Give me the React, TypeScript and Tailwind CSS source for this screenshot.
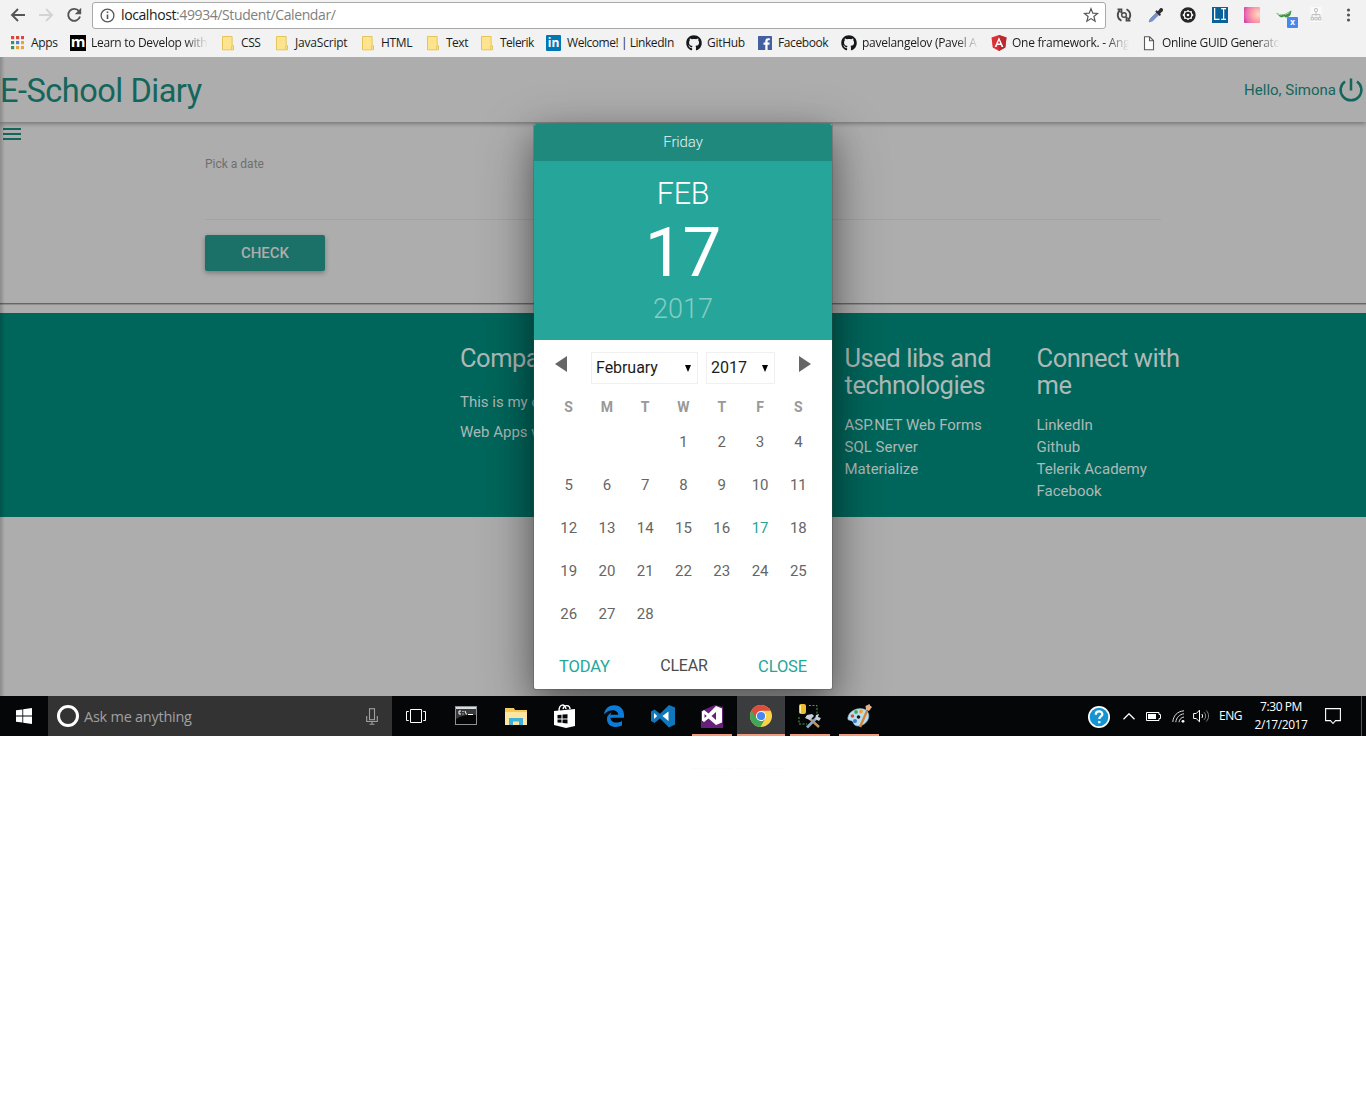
import React from 'react';
import { FaGithub } from 'react-icons/fa';

const ui = "font-['Open_Sans','Noto_Sans',sans-serif]";

function Folder() {
  return (
    <svg width="13" height="15" viewBox="0 0 13 15" className="shrink-0">
      <path d="M.5.5h9.6v9.2h1.4v4.1H.5z" fill="#ffe48f" stroke="#e5c559" />
      <path d="M9.7 10v3.5" stroke="#e5c559" />
    </svg>
  );
}

function AppsGrid() {
  const c = ['#d8483e', '#d8483e', '#d8483e', '#3b9458', '#4484d8', '#e8a33a', '#3b9458', '#e8a33a', '#e8a33a'];
  return (
    <svg width="14" height="14" viewBox="0 0 14 14" className="shrink-0">
      {c.map((f, i) => <rect key={i} x={1 + (i % 3) * 5} y={Math.floor(i / 3) * 5} width="3.2" height="3.2" fill={f} />)}
    </svg>
  );
}

function BrandM() {
  return <span className="flex h-4 w-4 shrink-0 items-center justify-center bg-black pb-[3px] font-['Open_Sans',sans-serif] text-[15px] font-bold leading-none text-white">m</span>;
}

function LinkedIn() {
  return <span className="flex h-4 w-[15px] shrink-0 items-center justify-center rounded-[1px] bg-[#0077b5] font-['Open_Sans',sans-serif] text-[12px] font-bold leading-none text-white">in</span>;
}

function Facebook() {
  return (
    <svg width="14" height="14" viewBox="0 0 14 14" className="shrink-0">
      <rect width="14" height="14" rx=".6" fill="#4460a0" />
      <path d="M9.6 14V8.7h1.8l.3-2.1H9.6V5.3c0-.6.2-1 1-1h1.2V2.3c-.2 0-.9-.1-1.7-.1-1.7 0-2.8 1-2.8 2.9v1.5H5.5v2.1h1.8V14z" fill="#fff" />
    </svg>
  );
}

function Angular() {
  return (
    <svg width="16" height="16" viewBox="0 0 16 16" className="shrink-0">
      <path d="M8 0l7.5 2.6-1.2 10L8 16l-6.3-3.4L.5 2.6z" fill="#dd3035" />
      <path d="M8 0l7.5 2.6-1.2 10L8 16z" fill="#b92a31" />
      <path d="M8 2.2L3.6 12.1h1.8l.9-2.2h3.4l.9 2.2h1.8zm0 3.3l1.2 3H6.8z" fill="#fff" />
    </svg>
  );
}

function PageIcon() {
  return (
    <svg width="12" height="15" viewBox="0 0 12 15" className="shrink-0">
      <path d="M1.5.8h5.2l3.8 3.8v9.2h-9zM6.5.8v4h4" fill="#fff" stroke="#5a5a5a" strokeWidth="1.1" />
    </svg>
  );
}

type Mark = { icon: React.ReactNode; label: string; box: string; gap: string; text: string };

const marks: Mark[] = [
  { icon: <AppsGrid />, label: 'Apps', box: 'w-[60px]', gap: 'gap-[7px]', text: 'tracking-[-0.3px]' },
  { icon: <BrandM />, label: 'Learn to Develop with', box: 'w-[152px]', gap: 'gap-[5px]', text: 'tracking-[-0.3px] w-[117px] overflow-hidden mask-r-from-80% mask-r-to-100%' },
  { icon: <Folder />, label: 'CSS', box: 'w-[54px]', gap: 'gap-[6px]', text: 'tracking-[-0.4px]' },
  { icon: <Folder />, label: 'JavaScript', box: 'w-[86px]', gap: 'gap-[6px]', text: 'tracking-[-0.2px]' },
  { icon: <Folder />, label: 'HTML', box: 'w-[65px]', gap: 'gap-[6px]', text: 'tracking-[-0.3px]' },
  { icon: <Folder />, label: 'Text', box: 'w-[54px]', gap: 'gap-[6px]', text: 'tracking-[-0.5px]' },
  { icon: <Folder />, label: 'Telerik', box: 'w-[65px]', gap: 'gap-[6px]', text: 'tracking-[-0.5px]' },
  { icon: <LinkedIn />, label: 'Welcome! | LinkedIn', box: 'w-[140px]', gap: 'gap-[6px]', text: 'tracking-[-0.45px]' },
  { icon: <FaGithub size={16} color="#14181c" className="shrink-0" />, label: 'GitHub', box: 'w-[72px]', gap: 'gap-[5px]', text: 'tracking-[-0.3px]' },
  { icon: <Facebook />, label: 'Facebook', box: 'w-[83px]', gap: 'gap-[6px]', text: 'tracking-[-0.4px]' },
  { icon: <FaGithub size={16} color="#14181c" className="shrink-0" />, label: 'pavelangelov (Pavel A', box: 'w-[150px]', gap: 'gap-[5px]', text: 'tracking-[-0.27px] w-[117px] overflow-hidden mask-r-from-80% mask-r-to-100%' },
  { icon: <Angular />, label: 'One framework. - Ang', box: 'w-[152px]', gap: 'gap-[5px]', text: 'tracking-[-0.25px] w-[117px] overflow-hidden mask-r-from-80% mask-r-to-100%' },
  { icon: <PageIcon />, label: 'Online GUID Generato', box: 'w-[140px]', gap: 'gap-[7px]', text: 'tracking-[-0.35px] w-[118px] overflow-hidden mask-r-from-80% mask-r-to-100%' },
];

function Browser() {
  return (
    <div className={`h-[57px] bg-[#f2f2f2] ${ui}`}>
      <div className="flex h-[30px] items-center">
        <div className="flex w-[92px] items-center gap-[12px] pl-[10px]">
          <svg width="16" height="16" viewBox="0 0 16 16" fill="none" stroke="#555" strokeWidth="1.9"><path d="M15 8H2.400M8 2L2 8l6 6" /></svg>
          <svg width="16" height="16" viewBox="0 0 16 16" fill="none" stroke="#d3d3d3" strokeWidth="1.9"><path d="M1 8h12.600M8 2l6 6-6 6" /></svg>
          <svg width="16" height="16" viewBox="0 0 16 16" fill="none" stroke="#555" strokeWidth="1.9"><path d="M13 4.200A6 6 0 1 0 14 9.600" /><path d="M15.200.8v6.400H8.800z" fill="#555" stroke="none" /></svg>
        </div>
        <div className="flex h-[27px] w-[1014px] items-center rounded-[3px] border border-[#a9a9a9] bg-white pl-[7px] pr-[6px]">
          <svg width="15" height="15" viewBox="0 0 15 15" fill="none" stroke="#555" strokeWidth="1.3"><circle cx="7.5" cy="7.5" r="6.4" /><path d="M7.500 6.500v4.600M7.500 3.600v1.500" strokeWidth="1.600" /></svg>
          <span className="ml-[6px] grow text-[14px] leading-4 tracking-[-0.4px] whitespace-nowrap text-[#808080]"><span className="text-[#1a1a1a]">localhost</span>:49934/Student/Calendar/</span>
          <svg width="16" height="16" viewBox="0 0 16 16" fill="none" stroke="#555" strokeWidth="1.2"><path d="M8 1.600l1.800 4.500 4.800.3-3.700 3.100 1.200 4.700L8 11.600l-4.100 2.600 1.200-4.700L1.400 6.400l4.800-.3z" /></svg>
        </div>
        <div className="flex items-center gap-[16px] pl-[10px]">
          <svg width="16" height="16" viewBox="0 0 16 16" fill="none" stroke="#4a4a4a" strokeWidth="1.8"><path d="M5.500 13.800A6.300 6.300 0 0 1 4 3.200M10.500 2.200A6.300 6.300 0 0 1 12 12.800" /><path d="M1.500 2.300h4v4M14.500 13.700h-4v-4" /><circle cx="8" cy="8" r="2.300" strokeWidth="1.400" /><path d="M4 4.500l2 1.500M10 10l2 1.500" strokeWidth="1" /></svg>
          <svg width="16" height="16" viewBox="0 0 16 16"><path d="M1 15l1.200-3.200 6.500-6.500 2.300 2.300-6.500 6.300z" fill="#6d93dd" stroke="#7b8390" strokeWidth=".7" /><path d="M7.200 4.600l1.400-1.300 1.300 1L12 1.400C13.300.2 15.600 1.400 15 3.400c-.2.9-1.900 2.200-2.900 3.100l.9 1.200-1.300 1.400z" fill="#2e2e30" /></svg>
          <svg width="16" height="16" viewBox="0 0 16 16"><circle cx="8" cy="8" r="6.200" fill="#262626" stroke="#262626" strokeWidth="3" /><path d="M8 2.800l1.500 1.400 2.200-.2.300 2.200 1.600 1.800-1.600 1.800-.3 2.200-2.200-.2L8 13.200l-1.500-1.400-2.200.2-.3-2.200L2.400 8 4 6.200 4.300 4l2.200.2z" fill="#fff" /><circle cx="8" cy="8" r="3.200" fill="#262626" /><circle cx="8" cy="8" r="1.300" fill="#fff" /></svg>
          <span className="flex h-4 w-4 items-center justify-center bg-[#0b6199] font-['DejaVu_Sans_Mono',monospace] text-[12px] leading-4 text-white"><span className="scale-y-130">LI</span></span>
          <span className="h-4 w-4 rounded-[1px] bg-[radial-gradient(circle_at_90%_45%,#ffd9cc_0%,#ffa9a6_35%,#e96bb2_75%,#c22d9b_100%)]" />
          <div className="relative h-4 w-4">
            <svg width="16" height="16" viewBox="0 0 16 16"><path d="M0 6l4 1.300 4 .2L15.500 3.500l-1 4.500C12 11 9.500 11 8 9.200c-1 1.500-4.300 1.600-5.300-.7z" fill="#43914a" /><path d="M2 7.200l4 .8M9 7.500l4.500-2" stroke="#b8dfb3" /></svg>
            <span className="absolute top-[10px] left-[11px] flex h-[11px] w-[11px] items-center justify-center rounded-[1px] bg-[#4688f1] pb-[1px] text-[8px] leading-none font-bold text-white">x</span>
          </div>
          <svg width="16" height="16" viewBox="0 0 16 16"><rect x="2.500" y="0" width="11" height="15" fill="#fafafa" /><g fill="#f4f4f4" stroke="#c2c2c2"><circle cx="8" cy="3" r="1.700" /><path d="M8 5v4M4 10V7.500h8V10M3 10.500h2.500v2.500H3zM6.800 10.500h2.500v2.500H6.800zM10.500 10.500H13v2.500h-2.500z" /></g></svg>
          <svg width="16" height="16" viewBox="0 0 16 16" fill="#555"><circle cx="8.500" cy="3" r="1.600" /><circle cx="8.500" cy="8" r="1.600" /><circle cx="8.500" cy="13" r="1.600" /></svg>
        </div>
      </div>
      <div className="flex h-[26px] items-center pl-[10px] text-[12px] leading-4 whitespace-nowrap text-[#1c1c1c]">
        {marks.map((m) => (
          <div key={m.label} className={`flex shrink-0 items-center ${m.box} ${m.gap}`}>
            {m.icon}
            <span className={m.text}>{m.label}</span>
          </div>
        ))}
      </div>
    </div>
  );
}

const days = [...Array(3).fill(''), ...Array.from({ length: 28 }, (_, i) => String(i + 1))];

function Picker() {
  return (
    <div className="absolute top-[67px] left-[534px] w-[298px] overflow-visible rounded-[2px] bg-white text-center shadow-[0_0_0_1px_rgba(70,70,70,0.3),0_10px_30px_rgba(0,0,0,0.25),0_18px_55px_rgba(0,0,0,0.38)]">
      <div className="h-[37px] rounded-t-[2px] bg-[#20897e] text-[15px] leading-[37px] font-light tracking-[-0.1px] text-[#e3f4f2]">Friday</div>
      <div className="flex h-[179px] flex-col items-center bg-[#26a69a] text-white">
        <div className="mt-[14px] text-[30.500px] leading-[38px] font-light tracking-[-0.3px]">FEB</div>
        <div className="mt-[6px] mr-px text-[69px] leading-[67px] tracking-[-1px]">17</div>
        <div className="mt-[6px] text-[27px] leading-[34px] font-light text-[#87ccc5]">2017</div>
      </div>
      <div className="flex h-[54px] pt-[12px] pl-[21px] text-[#1c1c1c]">
        <svg width="12" height="16" viewBox="0 0 12 16" className="mt-[4px]"><path d="M12 0v16L0 8z" fill="#666" /></svg>
        <div className="ml-[24px] flex h-[32px] w-[107px] items-center justify-between border border-[#f0f0f0] pr-[6px] pl-[4px] text-[16px] tracking-[-0.05px]">February<svg width="6" height="7" viewBox="0 0 6 7"><path d="M0 0h6L3 7z" /></svg></div>
        <div className="ml-[8px] flex h-[32px] w-[69px] items-center justify-between border border-[#f0f0f0] pr-[6px] pl-[4px] text-[16px]">2017<svg width="6" height="7" viewBox="0 0 6 7"><path d="M0 0h6L3 7z" /></svg></div>
        <svg width="12" height="16" viewBox="0 0 12 16" className="mt-[4px] ml-[24px]"><path d="M0 0v16l12-8z" fill="#666" /></svg>
      </div>
      <div className="grid grid-cols-7 pr-[14.500px] pl-[15.500px] text-[14px] leading-[27px] font-bold text-[#999]">
        {['S', 'M', 'T', 'W', 'T', 'F', 'S'].map((d, i) => <span key={i}>{d}</span>)}
      </div>
      <div className="grid grid-cols-7 pr-[14.500px] pl-[15.500px] text-[15px] leading-[43px] text-[#666]">
        {days.map((d, i) => <span key={i} className={d === '17' ? 'text-[#26a69a]' : ''}>{d}</span>)}
      </div>
      <div className="flex h-[53px] items-center justify-between pr-[25px] pl-[25px] pt-[9px] text-[16.500px] tracking-[-0.150px] text-[#26a69a]">
        <span>TODAY</span><span className="pb-[2px] text-[16px] tracking-[-0.200px] text-[#4c4c4c]">CLEAR</span><span>CLOSE</span>
      </div>
    </div>
  );
}

function Page() {
  return (
    <div className="relative h-[639px] overflow-hidden bg-[#adadad] font-['Roboto',sans-serif]">
      <div className="flex h-[65px] items-center justify-between pr-[2px] text-[#14665c] shadow-[0_2px_4px_rgba(0,0,0,0.3)]">
        <span className="pt-[3px] text-[32.500px] leading-none tracking-[-0.480px]">E-School Diary</span>
        <div className="flex items-center gap-[2px] text-[15px]">
          <span className="pt-px">Hello, Simona</span>
          <svg width="26" height="26" viewBox="0 0 26 26" fill="none" stroke="#14665c" strokeWidth="2.500"><path d="M13 1.500v12M7 4.400a10.400 10.400 0 1 0 12 0" /></svg>
        </div>
      </div>
      <div className="h-[191px] pt-[6px]">
        <svg width="18" height="12" viewBox="0 0 18 12" className="ml-[3px]" fill="#14665c"><path d="M0 0h18v2H0zM0 5h18v2H0zM0 10h18v2H0z" /></svg>
        <div className="ml-[205px] w-[956px]">
          <div className="h-[80px] border-b border-[#9da5a7] pt-[15px] text-[12px] leading-[18px] text-[#6f6f6f]">Pick a date</div>
          <div className="mt-[15px] h-[36px] w-[120px] rounded-[2px] bg-[#1b7168] text-center text-[15px] leading-[36px] font-medium text-[#adadad] shadow-[0_2px_5px_rgba(0,0,0,0.3)]">CHECK</div>
        </div>
        <div className="mt-[32px] h-[2px] border-t border-[#666] bg-[#8e8e8e]" />
      </div>
      <footer className="flex h-[204px] bg-[#00665b] pt-[32px] pl-[460px] text-[15px] leading-[22px] text-[#adb9b7]">
        <div className="w-[384.500px]">
          <h5 className="text-[25.500px] leading-[27px] tracking-[-0.500px]">Company Bio</h5>
          <p className="mt-[19px]">This is my course</p>
          <p className="mt-[8px]">Web Apps with</p>
        </div>
        <div className="w-[192px]">
          <h5 className="mb-[15px] text-[25.500px] leading-[27px] tracking-[-0.450px]">Used libs and<br />technologies</h5>
          <p>ASP.NET Web Forms</p><p>SQL Server</p><p>Materialize</p>
        </div>
        <div className="w-[170px]">
          <h5 className="mb-[15px] text-[25.500px] leading-[27px] tracking-[-0.450px]">Connect with<br />me</h5>
          <p>LinkedIn</p><p>Github</p><p>Telerik Academy</p><p>Facebook</p>
        </div>
      </footer>
      <div className="absolute inset-y-0 left-0 w-[5px] bg-gradient-to-r from-black/20 to-transparent" />
      <Picker />
    </div>
  );
}

function Chrome() {
  return (
    <svg width="22" height="22" viewBox="0 0 22 22">
      <circle cx="11" cy="11" r="11" fill="#fdd14a" />
      <path d="M11 11L1.500 5.500A11 11 0 0 0 10.500 22l4.800-8.500z" fill="#3fa65a" />
      <path d="M1.500 5.500A11 11 0 0 1 20.600 5.800H11L6.500 13.500z" fill="#df4b3d" />
      <circle cx="11" cy="11" r="5.100" fill="#fff" /><circle cx="11" cy="11" r="4.100" fill="#4688f0" />
    </svg>
  );
}

const tasks: { box: string; on?: boolean; icon: React.ReactNode }[] = [
  { box: 'w-[48px]', icon: <svg width="22" height="20" viewBox="0 0 22 20"><rect x=".5" y=".5" width="21" height="18" fill="#050505" stroke="#8c9297" /><path d="M1 2h20" stroke="#d9dcdd" strokeWidth="2" /><path d="M1 3h20v6C12 8 6 10 1 13z" fill="#38393b" /><path d="M6 5H4v3h2M8 5v1M8 7.500v1M10 5l1.500 3.500M13 8.500h5" stroke="#fff" fill="none" /></svg> },
  { box: 'w-[51px]', icon: <svg width="22" height="19" viewBox="0 0 22 19"><path d="M0 1h9l1 2h12v15H0z" fill="#f5c955" /><path d="M0 5h22v13H0z" fill="#ffe6a0" /><path d="M4 18v-7h14v7h-4v-3.500H8V18z" fill="#3fb2dc" /></svg> },
  { box: 'w-[47px]', icon: <svg width="22" height="24" viewBox="0 0 22 24"><path d="M0 7l21-2v17l-9 2L0 21z" fill="#fff" /><path d="M5 7C5 0 11-1 12 5M9 5c1-5 7-4 7 0" fill="none" stroke="#fff" strokeWidth="1.400" /><path d="M3.500 11l4-.3v3.700h-4zM8.500 10.600l5-.4v4.200h-5zM3.500 15.400h4v3.400l-4-.3zM8.500 15.400h5v4l-5-.5z" fill="#050608" /></svg> },
  { box: 'w-[51px]', icon: <svg width="20" height="22" viewBox="0 0 20 22"><path d="M0 9.500C1-3 20-3 20 10v2.700H6.500c.2 5.500 7.500 6 11.500 3.400v4.500c-6 3-15 1.200-15-6.400 0-4 2.800-6 5-7-1.300 1.300-1.500 2.500-1.500 2.500h7.700C14.200 4 5 3.500 0 9.500z" fill="#0c7cd8" /></svg> },
  { box: 'w-[48px]', icon: <svg width="24" height="23" viewBox="0 0 24 23"><path d="M0 6.500L3.500 4.500 9 8.800 18 0l6 2.500V19.500L18 22.500 9 13.500 3.500 18 0 16z" fill="#1177bd" /><path d="M3 8v6l3.200-3zM17.500 6.500v9.500L11.500 11z" fill="#fff" /></svg> },
  { box: 'w-[50px]', on: true, icon: <svg width="22" height="23" viewBox="0 0 22 23"><path d="M0 6l14-6 8 2v21H0z" fill="#68217a" /><path fillRule="evenodd" d="M15 1l6 2.500v14L15 20l-7.500-6.500L3 17l-2-1.500v-9L3 5l4.500 3.500zM3.500 9v4l2.300-2zM15 7l-4.500 4 4.500 4z" fill="#fff" /></svg> },
  { box: 'w-[48px]', on: true, icon: <Chrome /> },
  { box: 'w-[50px]', on: true, icon: <svg width="24" height="25" viewBox="0 0 24 25"><rect x="1" y="0" width="7" height="10" rx="2" fill="#eebd2c" /><path d="M2.500 1v8" stroke="#fff1a3" /><path d="M11 1.500h8v8M1 13v7h8" fill="none" stroke="#4ba343" strokeDasharray="2 1.500" /><path d="M11 14l10 9" stroke="#c99552" strokeWidth="2.400" /><path d="M9 23.500l9-9" stroke="#8da4c5" strokeWidth="2.800" /><path d="M7 14l2-3 5-1 2 2-4 4zM17 15l1-4 3-1-1 3 3 1-2 3z" fill="#c9d2da" /></svg> },
  { box: 'w-[48px]', on: true, icon: <svg width="25" height="24" viewBox="0 0 25 24"><path d="M1 13C3 5 15 2 20 7c5 6-1 15-9 15-5 0-4-4-6-5s-5 0-4-4z" fill="#b8dff0" stroke="#7daec7" strokeWidth=".6" /><circle cx="5.500" cy="12" r="1.800" fill="#d64b40" /><circle cx="9" cy="8" r="1.900" fill="#4aaa49" /><circle cx="14" cy="7.500" r="1.900" fill="#f0a32f" /><circle cx="8" cy="17" r="2" fill="#3c77c8" /><circle cx="11.500" cy="13" r="1.800" fill="#11171c" /><path d="M13 23l7-16" stroke="#d4853c" strokeWidth="2.400" /><path d="M19 6l-.5-4 4-2 .5 1.500L25 3l-3 4z" fill="#e0b487" /></svg> },
];

function Taskbar() {
  return (
    <div className={`flex h-10 items-stretch bg-[#050608] text-white ${ui}`}>
      <div className="flex w-12 items-center justify-center">
        <svg width="16" height="16" viewBox="0 0 16 16" fill="#fff"><path d="M0 2.300l6.400-.9v6.200H0zM7.200 1.300L16 0v7.600H7.200zM0 8.400h6.400v6.200L0 13.700zM7.200 8.400H16V16l-8.800-1.300z" /></svg>
      </div>
      <div className="flex w-[344px] items-center bg-[#333] pr-[14px] pl-[9px]">
        <span className="h-[22px] w-[22px] rounded-full border-[3px] border-white" />
        <span className="mt-px ml-[5px] grow text-[14.500px] tracking-[-0.250px] text-[#a0a0a0]">Ask me anything</span>
        <svg width="12" height="17" viewBox="0 0 12 17" fill="none" stroke="#a0a0a0" strokeWidth="1.100"><rect x="3.500" y=".7" width="5" height="11" /><path d="M.7 8v5.500h10.600V8M6 13.500V16M3.500 16.300h5" /></svg>
      </div>
      <div className="flex w-[50px] items-center justify-center pr-[2px]">
        <svg width="20" height="14" viewBox="0 0 20 14" fill="none" stroke="#fff"><path d="M4.500.5h11v13h-11zM2.800 2.500H.5v9h2.300M17.200 2.500h2.300v9h-2.300" /></svg>
      </div>
      <div className="flex">
        {tasks.map((t, i) => (
          <div key={i} className={`flex shrink-0 justify-center ${t.box}`}>
            <div className={`flex items-center justify-center border-b-2 pt-[2px] ${i === 6 ? 'w-[48px] bg-[#3b3c3d]' : 'w-[40px]'} ${t.on ? 'border-[#f29a7e]' : 'border-transparent'}`}>{t.icon}</div>
          </div>
        ))}
      </div>
      <div className="ml-auto flex items-center text-[12px] tracking-[-0.440px] whitespace-nowrap">
        <svg width="24" height="24" viewBox="0 0 24 24" className="mt-[2px]"><circle cx="12" cy="12" r="11" fill="#fff" /><circle cx="12" cy="12" r="9.300" fill="#1594d2" /><path d="M8.800 9.700c0-4.500 6.700-4.200 6.500-.3-.1 2-3 2.100-3 4.500M12.300 16v2.300" fill="none" stroke="#fff" strokeWidth="2.300" /></svg>
        <svg width="12" height="7" viewBox="0 0 12 7" className="ml-[12px]" fill="none" stroke="#fff" strokeWidth="1.300"><path d="M.5 6.200L6 .8l5.500 5.400" /></svg>
        <svg width="15" height="9" viewBox="0 0 15 9" className="ml-[11px]"><path d="M.5.5h12.500v2h1.500v4H13v2H.5z" fill="none" stroke="#fff" /><path d="M2 2h8v5H2z" fill="#fff" /></svg>
        <svg width="13" height="13" viewBox="0 0 13 13" className="ml-[11px]" fill="none" stroke="#ddd"><path d="M.8 12C1.300 5.500 5.500 1.300 12 .8M3.800 12.200c.4-4.500 3.700-8 8.200-8.400M7 12.200c.3-2.700 2.300-5 5-5.200" /><circle cx="11" cy="11.300" r="1.400" fill="#fff" stroke="none" /></svg>
        <svg width="17" height="14" viewBox="0 0 17 14" className="ml-[8px]" fill="none" stroke="#fff"><path d="M.6 4.500h2.600l3.300-3.300v11.600L3.200 9.500H.6z" /><path d="M8.800 5c1 1.200 1 2.800 0 4" /><path d="M11 3.200c2.200 2.200 2.200 5.400 0 7.600M13.200 1.500c3.200 3.200 3.200 7.800 0 11" stroke="#858585" /></svg>
        <span className="ml-[9px] w-[24px]">ENG</span>
        <div className="ml-[11px] w-[54px] text-center leading-[18px]"><div>7:30 PM</div><div>2/17/2017</div></div>
        <svg width="16" height="17" viewBox="0 0 16 17" className="ml-[17px]" fill="none" stroke="#fff" strokeWidth="1.100"><path d="M.6.600h14.800v12H10.500L8 15.500l-2.500-2.900H.6z" /></svg>
        <span className="ml-[20px] h-10 w-[5px] border-l border-[#555]" />
      </div>
    </div>
  );
}

export default function App() {
  return (
    <div className="h-[1103px] w-[1366px] overflow-hidden bg-white">
      <Browser />
      <Page />
      <Taskbar />
      <div className="mt-[32px] ml-[692px] flex gap-[5px]">
        <span className="h-px w-[40px] bg-[#fbfbfa]" />
        <span className="h-px w-[48px] bg-[#fbfbfa]" />
      </div>
    </div>
  );
}
